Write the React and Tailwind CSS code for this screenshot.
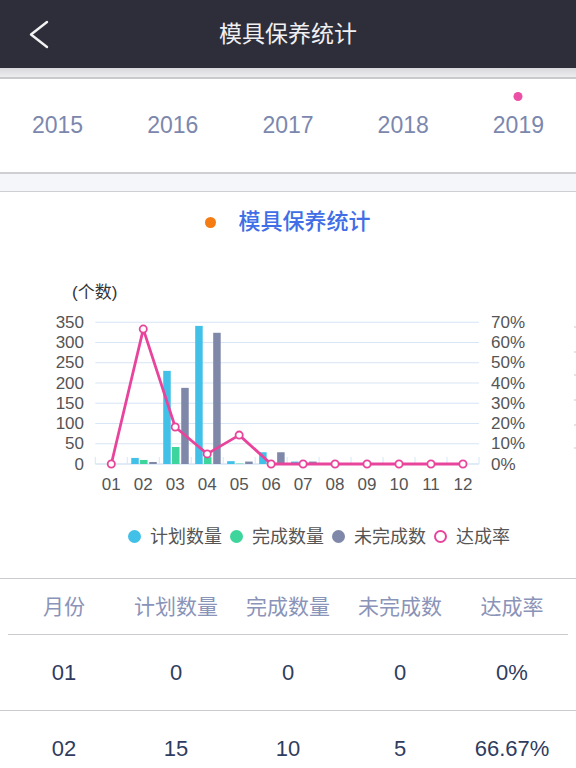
import React from 'react';

const years = ['2015', '2016', '2017', '2018', '2019'];
const months = ['01', '02', '03', '04', '05', '06', '07', '08', '09', '10', '11', '12'];
// [计划, 完成, 未完成]
const counts = [
  [0, 0, 0], [15, 10, 5], [230, 42, 188], [341, 17, 324], [7, 1, 6], [29, 0, 29],
  [6, 0, 6], [0, 0, 0], [0, 0, 0], [0, 0, 0], [0, 0, 0], [0, 0, 0],
];
const rates = [0, 66.67, 18.26, 4.99, 14.29, 0, 0, 0, 0, 0, 0, 0];

const X0 = 95.3;
const CW = 31.97;
const BASE = 464;
const K = 0.405; // px per 个
const KP = 2.024; // px per %
const cx = (i) => X0 + CW * (i + 0.5);

const rows = [
  ['01', '0', '0', '0', '0%'],
  ['02', '15', '10', '5', '66.67%'],
];

function Chart() {
  const grid = [0, 1, 2, 3, 4, 5, 6, 7];
  const pts = rates.map((r, i) => [cx(i), BASE - r * KP]);
  const line = pts.map((p, i) => (i ? 'L' : 'M') + p[0].toFixed(1) + ' ' + p[1].toFixed(1)).join(' ');
  const colors = ['#41c0e8', '#3dd59b', '#7f88a8'];
  const offs = [-12, -3.2, 6];

  return (
    <svg width="576" height="250" viewBox="0 252 576 250" className="block">
      <text x="72" y="292" fontSize="17" fill="#333" dominantBaseline="central">(个数)</text>

      {grid.map((g) => {
        const y = BASE - g * 50 * K;
        return (
          <g key={g}>
            <line x1={X0} x2={479} y1={y} y2={y} stroke="#d7e5f5" strokeWidth={g === 0 ? 1.5 : 1} />
            <text x="84" y={y} fontSize="17" fill="#555" textAnchor="end" dominantBaseline="central">{g * 50}</text>
            <text x="491" y={y} fontSize="17" fill="#555" dominantBaseline="central">{g * 10}%</text>
          </g>
        );
      })}

      {months.map((m, i) => (
        <line key={'t' + m} x1={X0 + CW * i} x2={X0 + CW * i} y1={BASE - 7} y2={BASE} stroke="#d7e5f5" strokeWidth="1" />
      ))}
      <line x1={479} x2={479} y1={BASE - 7} y2={BASE} stroke="#d7e5f5" strokeWidth="1" />

      {counts.map((c, i) =>
        c.map((v, s) =>
          v > 0 ? (
            <rect key={i + '-' + s} x={cx(i) + offs[s]} y={BASE - v * K} width="7.5" height={v * K} fill={colors[s]} />
          ) : null
        )
      )}

      {months.map((m, i) => (
        <text key={m} x={cx(i)} y="484" fontSize="17" fill="#555" textAnchor="middle" dominantBaseline="central">{m}</text>
      ))}

      <path d={line} fill="none" stroke="#e8449c" strokeWidth="2.8" strokeLinejoin="round" />
      {pts.map((p, i) => (
        <circle key={'p' + i} cx={p[0]} cy={p[1]} r="3.6" fill="#fff" stroke="#e8449c" strokeWidth="1.8" />
      ))}

      {[327, 352, 375, 400, 425, 448].map((y) => (
        <rect key={'e' + y} x="574" y={y - 1} width="2" height="2" fill="#e4e4e8" />
      ))}
    </svg>
  );
}

function Legend() {
  const items = [
    { label: '计划数量', dot: 'bg-[#41c0e8]' },
    { label: '完成数量', dot: 'bg-[#3dd59b]' },
    { label: '未完成数', dot: 'bg-[#7f88a8]' },
  ];
  return (
    <div className="h-[77px] pb-[7px] flex items-center pl-[128px] border-b border-[#cbcbcf]">
      {items.map((it) => (
        <div key={it.label} className="flex items-center mr-[8px]">
          <span className={'w-[13px] h-[13px] rounded-full ' + it.dot} />
          <span className="ml-[9px] text-[18px] text-[#555] leading-none">{it.label}</span>
        </div>
      ))}
      <div className="flex items-center">
        <span className="w-[13px] h-[13px] rounded-full border-2 border-[#e8449c] bg-white" />
        <span className="ml-[9px] text-[18px] text-[#555] leading-none">达成率</span>
      </div>
    </div>
  );
}

export default function App() {
  return (
    <div className="w-[576px] h-[768px] overflow-hidden bg-white font-['Liberation_Sans','Noto_Sans_CJK_SC',sans-serif]">
      {/* 顶部导航 */}
      <header className="h-[68px] bg-[#2e2e3b] flex items-center relative">
        <svg width="24" height="30" viewBox="0 0 24 30" className="ml-[27px]">
          <polyline points="20,3 4,15.5 20,28" fill="none" stroke="#f2f2f2" strokeWidth="2.4" strokeLinecap="round" strokeLinejoin="round" />
        </svg>
        <h1 className="absolute left-0 right-0 text-center text-[23px] text-[#f0f0f2] leading-none pointer-events-none">模具保养统计</h1>
      </header>
      <div className="h-[11px] bg-gradient-to-b from-[#d9d9dd] to-[#ededf0] border-b-2 border-[#cacacd]" />

      {/* 年份 */}
      <div className="h-[95px] grid grid-cols-5 border-b-2 border-[#cfcfd3]">
        {years.map((y) => (
          <div key={y} className="relative flex items-center justify-center text-[23px] text-[#7c87ae]">
            {y === '2019' && <span className="absolute top-[13px] left-1/2 -translate-x-1/2 w-[9px] h-[9px] rounded-full bg-[#ec4fa6]" />}
            {y}
          </div>
        ))}
      </div>
      <div className="h-[17px] bg-[#f5f6fa] border-b border-[#cfcfd3] box-content" />

      {/* 图表 */}
      <div className="h-[60px] flex items-center justify-center">
        <span className="w-[11px] h-[11px] rounded-full bg-[#f57c13]" />
        <span className="ml-[22px] text-[22px] font-medium text-[#3f6ee6] leading-none">模具保养统计</span>
      </div>
      <Chart />
      <Legend />

      {/* 表格 */}
      <div className="mx-[8px] h-[56px] grid grid-cols-5 items-center border-b border-[#cbcbcf]">
        {['月份', '计划数量', '完成数量', '未完成数', '达成率'].map((h) => (
          <div key={h} className="text-center text-[21px] text-[#8a93b8] leading-none">{h}</div>
        ))}
      </div>
      {rows.map((r) => (
        <div key={r[0]} className="h-[76px] border-b border-[#cbcbcf]">
          <div className="mx-[8px] h-full grid grid-cols-5 items-center">
            {r.map((v, i) => (
              <div key={i} className="text-center text-[22px] text-[#2f3c60] leading-none">{v}</div>
            ))}
          </div>
        </div>
      ))}
    </div>
  );
}
